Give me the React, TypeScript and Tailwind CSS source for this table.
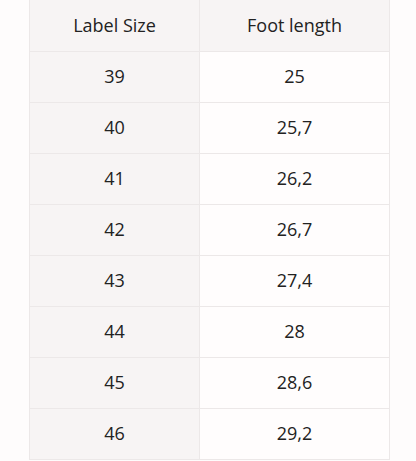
const rows: [string, string][] = [
  ["39", "25"],
  ["40", "25,7"],
  ["41", "26,2"],
  ["42", "26,7"],
  ["43", "27,4"],
  ["44", "28"],
  ["45", "28,6"],
  ["46", "29,2"],
];

export default function App() {
  return (
    <div className="min-h-[461px] w-[416px] bg-[#fefcfc] font-['Open_Sans',sans-serif] text-[18px] text-[#222]">
      <table className="ml-[29px] w-[361px] border-collapse">
        <thead>
          <tr className="h-[51px]">
            <th className="w-[170px] border border-t-0 border-[#ece8e8] bg-[#f7f4f4] font-normal">Label Size</th>
            <th className="border border-t-0 border-[#ece8e8] bg-[#f7f4f4] font-normal">Foot length</th>
          </tr>
        </thead>
        <tbody>
          {rows.map(([size, foot]) => (
            <tr key={size} className="h-[51px]">
              <td className="border border-[#ece8e8] bg-[#f7f4f4] text-center">{size}</td>
              <td className="border border-[#ece8e8] bg-[#fffdfd] text-center">{foot}</td>
            </tr>
          ))}
        </tbody>
      </table>
    </div>
  );
}
